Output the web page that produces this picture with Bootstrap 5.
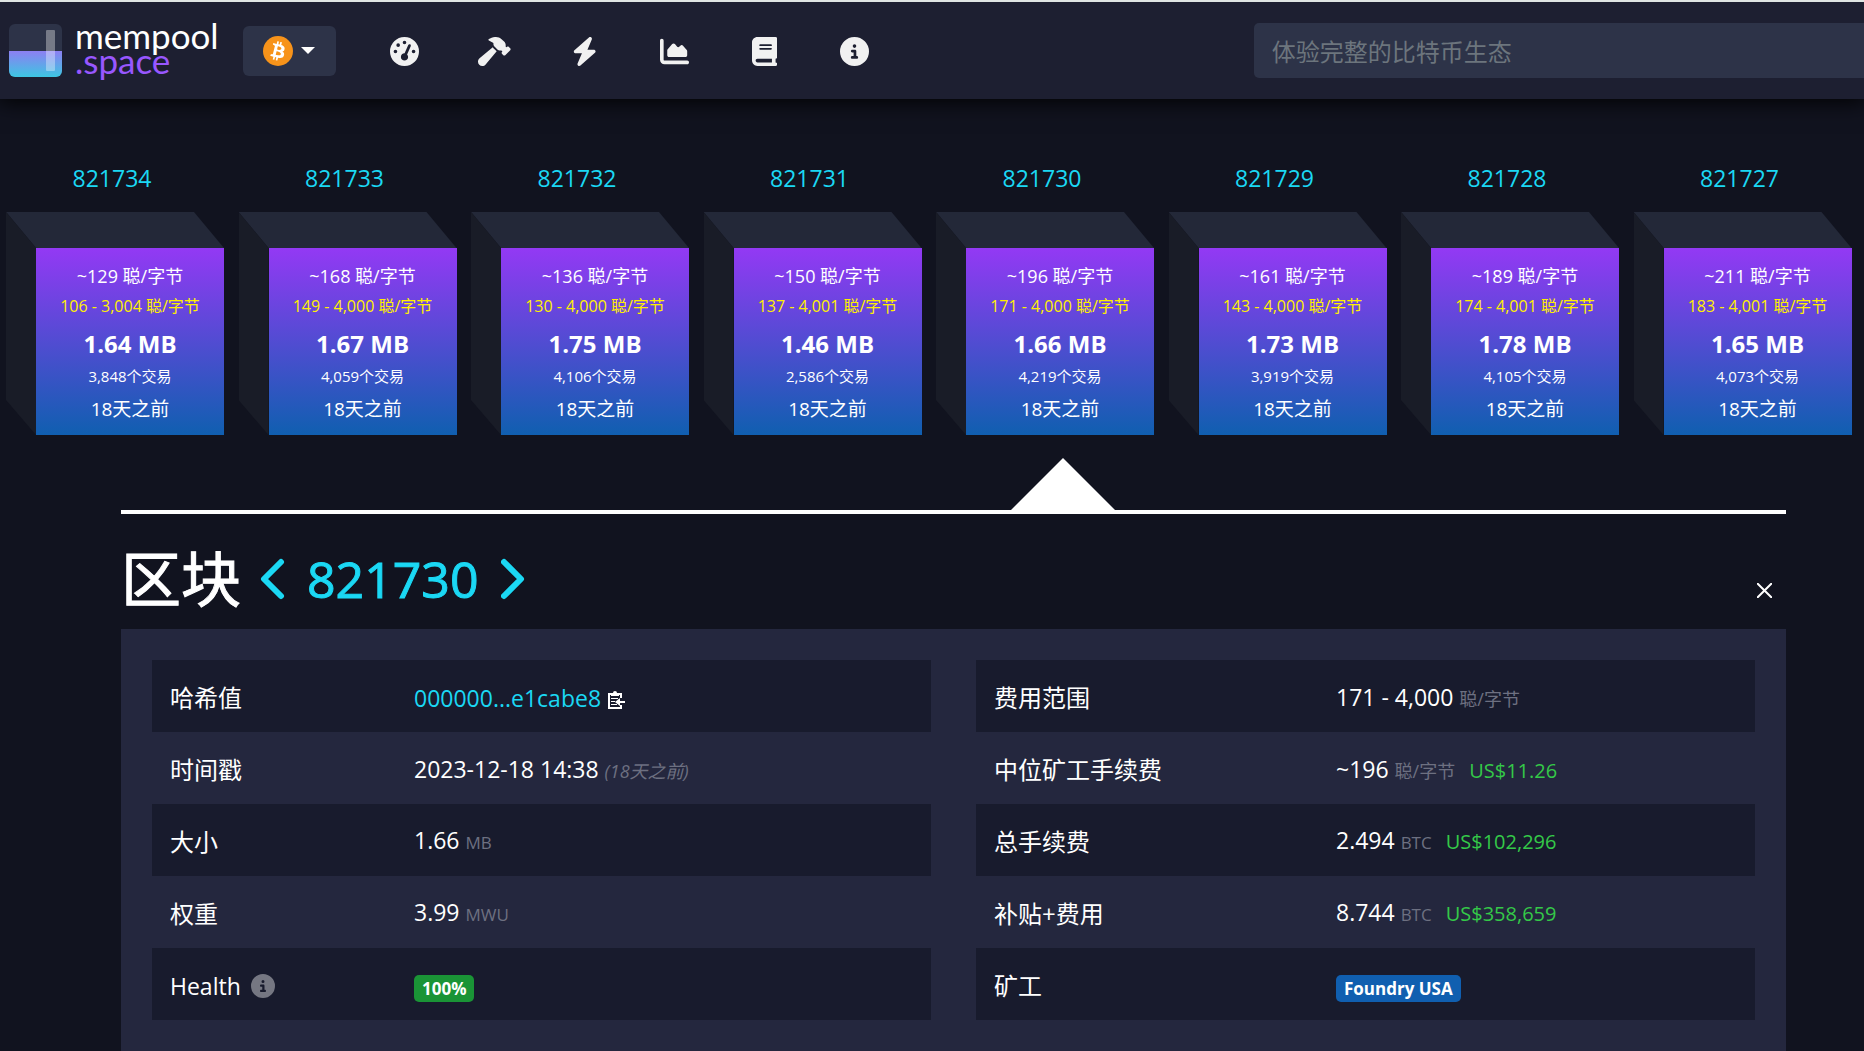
<!DOCTYPE html>
<html lang="zh-CN">
<head>
<meta charset="utf-8">
<meta name="viewport" content="width=device-width, initial-scale=1">
<title>mempool.space</title>
<link href="https://cdn.jsdelivr.net/npm/bootstrap@5.3.0/dist/css/bootstrap.min.css" rel="stylesheet">
<style>
:root { --ink:#11131f; --bar:#1d1f31; --well:#2d3348; --cyan:#1bd8f4; --dim:#6d7081; }
body { background:var(--ink); color:#fff; font-family:"Open Sans","Noto Sans CJK SC",sans-serif; font-size:23px; line-height:36px; overflow-x:hidden; }
a { color:var(--cyan); text-decoration:none; }
a:hover { color:#fff; }
.topbar { background:var(--bar); border-top:2px solid #dfe5e3; height:99px; padding-left:9px; box-shadow:0 0 22px 2px #000; position:relative; z-index:2; }
.brandmark { width:53px; height:53px; }
.wordmark { font-family:Lato,"Open Sans",sans-serif; font-size:35px; line-height:25px; color:#fff; padding-bottom:6px; margin-left:13px; }
.wordmark span { display:block; }
.wordmark .tld { color:#9857ff; }
.net-btn { width:93px; height:50px; background:var(--well); border:0; border-radius:6px; color:#fff; }
.net-btn:hover { background:#39405a; }
.menu-link { width:90px; height:50px; color:#f1f1f1; padding-top:2px; }
.menu-link svg { height:29px; }
.search-form { width:33%; padding-left:2px; }
.search-box, .search-box:focus { height:55px; background:var(--well); border:0; border-radius:5px 0 0 5px; color:#fff; font-size:24px; padding:2px 18px 0; box-shadow:none; }
.search-box::placeholder { color:#6c757d; opacity:1; }
.chain { display:grid; grid-template-columns:repeat(8,1fr); padding:61px 0 75px 4px; }
.chain-item { padding-left:2px; position:relative; }
.chain-item .height-link { display:block; width:212px; text-align:center; margin-bottom:16px; }
.cube { position:relative; width:218px; padding:36px 0 0 30px; }
.cube::before, .cube::after { content:""; position:absolute; inset:0; z-index:-1; }
.cube::before { background:#232838; clip-path:polygon(0 0,188px 0,100% 36px,30px 36px); }
.cube::after { background:#191c27; clip-path:polygon(0 0,30px 36px,30px 100%,0 188px); }
.face { height:187px; padding-top:14px; background:linear-gradient(#9339f4,#105fb0); text-align:center; white-space:nowrap; color:#fff; }
.fee-mid { font-size:18px; line-height:28px; }
.fee-span { font-size:16px; line-height:32px; color:#fff000; }
.blk-size { font-size:24px; line-height:44px; font-weight:700; }
.blk-txs { font-size:15px; line-height:20px; }
.blk-age { font-size:19px; line-height:46px; }
.pointer { position:absolute; left:77px; bottom:-75px; width:104px; height:52px; background:#fff; clip-path:polygon(50% 0,100% 100%,0 100%); }
.block-page { margin:0 78px 0 121px; border-top:4px solid #fff; }
.block-head { height:115px; padding:14px 14px 0 0; }
.block-head h1 { font-size:60px; line-height:72px; font-weight:400; -webkit-text-stroke:1px #fff; }
.block-head .num { font-size:50px; line-height:72px; -webkit-text-stroke:1px var(--cyan); margin:0 22px; }
.block-head .step { display:flex; }
.block-head h1 + .step { margin-left:18px; }
.close-btn { background:none; border:0; color:#fff; padding:0; width:15px; height:15px; line-height:0; }
.panel { background:#24273e; padding:31px 31px 48px; display:grid; grid-template-columns:1fr 1fr; gap:45px; }
.facts { width:100%; table-layout:fixed; }
.facts tr { height:72px; }
.facts tr:nth-child(odd) { background:#181b2d; }
.facts th { font-weight:400; font-size:24px; padding:3px 0 0 18px; width:262px; }
.facts.wide th { width:360px; }
.facts td { padding:3px 0 0; white-space:nowrap; }
.facts .latin { font-size:23px; }
.facts svg { vertical-align:-3px; }
.unit { font-size:18px; color:var(--dim); }
.unit.coin { font-size:17px; }
.usd { font-size:20px; color:#34c948; margin-left:8px; }
.tag { font-size:17px; line-height:27px; font-weight:700; border-radius:5px; padding:0 8px; display:inline-block; vertical-align:middle; color:#fff; }
.tag-ok { background:#1a9436; }
.tag-pool { background:#105fb0; }
</style>
</head>
<body>
<header class="topbar d-flex align-items-center">
  <a class="d-flex align-items-center" href="#" aria-label="mempool.space">
    <svg class="brandmark" viewBox="0 0 53 53"><defs><linearGradient id="lg" x1="0" y1="0" x2="0" y2="1"><stop offset="0" stop-color="#8d7ff2"/><stop offset="1" stop-color="#3dc6e2"/></linearGradient></defs><rect width="53" height="53" rx="6" fill="#2d3348"/><path d="M0 27H53V47a6 6 0 0 1-6 6H6a6 6 0 0 1-6-6Z" fill="url(#lg)"/><rect x="37" y="6" width="9" height="41" rx="1" fill="#fff" opacity=".35"/></svg>
    <span class="wordmark"><span>mempool</span><span class="tld">.space</span></span>
  </a>
  <button class="net-btn d-flex align-items-center justify-content-center ms-4" type="button" aria-label="Bitcoin">
    <svg width="30" height="30" viewBox="0 0 64 64"><circle cx="32" cy="32" r="32" fill="#f7931a"/><path fill="#fff" d="M46.1 27.4c.6-4.300-2.600-6.600-7.100-8.100l1.500-5.800-3.600-.9-1.400 5.700-2.800-.7 1.400-5.700-3.500-.9-1.500 5.800-7.100-1.700-.9 3.800s2.600.6 2.600.6c1.400.4 1.700 1.300 1.600 2.100l-4.100 16.400c-.2.400-.6 1.100-1.600.8 0 .1-2.600-.6-2.600-.6l-1.700 4.100 6.900 1.700-1.500 5.900 3.500.9 1.500-5.800 2.800.7-1.400 5.800 3.500.9 1.500-5.900c6 1.100 10.600.7 12.500-4.800 1.600-4.400-.1-6.900-3.200-8.600 2.300-.5 4-2 4.400-5.100zm-8.100 11.300c-1.100 4.400-8.500 2-10.900 1.400l1.900-7.800c2.400.6 10.100 1.800 9 6.400zm1.100-11.400c-1 4-7.200 2-9.200 1.500l1.800-7.100c2 .5 8.400 1.400 7.400 5.600z"/></svg>
    <svg class="ms-2" width="14" height="7" viewBox="0 0 14 7"><path d="M0 0h14L7 7Z" fill="#fff"/></svg>
  </button>
  <nav class="d-flex ms-4">
    <a class="menu-link d-flex align-items-center justify-content-center" href="#" aria-label="Dashboard"><svg viewBox="0 0 512 512"><path fill="currentColor" d="M0 256a256 256 0 1 1 512 0A256 256 0 1 1 0 256zM288 96a32 32 0 1 0-64 0 32 32 0 1 0 64 0zM256 416c35.300 0 64-28.700 64-64 0-17.400-6.900-33.100-18.100-44.600L366 161.700c5.300-12.100-.2-26.300-12.300-31.600s-26.300.2-31.600 12.300L257.900 288H256c-35.300 0-64 28.700-64 64s28.700 64 64 64zM176 144a32 32 0 1 0-64 0 32 32 0 1 0 64 0zM96 288a32 32 0 1 0 0-64 32 32 0 1 0 0 64zM448 256a32 32 0 1 0-64 0 32 32 0 1 0 64 0z"/></svg></a>
    <a class="menu-link d-flex align-items-center justify-content-center" href="#" aria-label="Mining"><svg viewBox="0 0 576 512"><path fill="currentColor" d="M413.500 237.500c-28.200 4.800-58.200-3.600-80-25.400l-38.100-38.100C280.400 159 272 138.800 272 117.600V105.500L192.300 62c-5.300-2.900-8.600-8.600-8.300-14.700s3.900-11.500 9.500-14l47.200-21C259.100 4.200 279 0 299.200 0h18.100c36.700 0 72 14 98.700 39.100l44.600 42c24.200 22.800 33.200 55.700 26.600 86L503 183l8-8c9.400-9.400 24.600-9.400 33.900 0l24 24c9.400 9.400 9.400 24.600 0 33.900l-88 88c-9.400 9.400-24.600 9.400-33.900 0l-24-24c-9.400-9.400-9.400-24.600 0-33.900l8-8-17.500-17.500zM27.400 377.100L260.900 182.600c3.500 4.900 7.500 9.600 11.800 14l38.100 38.100c6 6 12.400 11.200 19.200 15.700L134.900 484.600c-14.500 17.400-36 27.400-58.600 27.400C34.100 512 0 477.800 0 435.700c0-22.600 10.100-44.100 27.400-58.600z"/></svg></a>
    <a class="menu-link d-flex align-items-center justify-content-center" href="#" aria-label="Lightning"><svg viewBox="0 0 448 512"><path fill="currentColor" d="M349.400 44.600c5.900-13.700 1.500-29.700-10.600-38.500s-28.600-8-39.900 1.800l-256 224c-10 8.800-13.600 22.900-8.900 35.300S50.700 288 64 288H175.500L98.600 467.400c-5.900 13.700-1.500 29.700 10.600 38.500s28.600 8 39.900-1.800l256-224c10-8.800 13.600-22.900 8.900-35.300s-16.600-20.700-30-20.700H272.500L349.400 44.600z"/></svg></a>
    <a class="menu-link d-flex align-items-center justify-content-center" href="#" aria-label="Graphs"><svg viewBox="0 0 512 512"><path fill="currentColor" d="M64 64c0-17.700-14.300-32-32-32S0 46.300 0 64V400c0 44.200 35.800 80 80 80H480c17.700 0 32-14.300 32-32s-14.300-32-32-32H80c-8.800 0-16-7.200-16-16V64zm96 288H448c17.700 0 32-14.300 32-32V251.800c0-7.600-2.700-15-7.700-20.800l-65.800-76.800c-12.100-14.200-33.700-15-46.900-1.800l-21 21c-10 10-26.400 9.200-35.400-1.600l-39.200-47c-12.600-15.100-35.700-15.400-48.700-.6L135.900 215c-5.100 5.800-7.900 13.300-7.900 21.100v84c0 17.700 14.300 32 32 32z"/></svg></a>
    <a class="menu-link d-flex align-items-center justify-content-center" href="#" aria-label="Documentation"><svg viewBox="0 0 448 512"><path fill="currentColor" d="M96 0C43 0 0 43 0 96V416c0 53 43 96 96 96H384h32c17.700 0 32-14.300 32-32s-14.300-32-32-32V384c17.700 0 32-14.300 32-32V32c0-17.700-14.300-32-32-32H384 96zm0 384H352v64H96c-17.700 0-32-14.300-32-32s14.300-32 32-32zm32-240c0-8.800 7.200-16 16-16H336c8.800 0 16 7.200 16 16s-7.200 16-16 16H144c-8.800 0-16-7.200-16-16zm16 48H336c8.800 0 16 7.200 16 16s-7.200 16-16 16H144c-8.800 0-16-7.200-16-16s7.200-16 16-16z"/></svg></a>
    <a class="menu-link d-flex align-items-center justify-content-center" href="#" aria-label="About"><svg viewBox="0 0 512 512"><path fill="currentColor" d="M256 512A256 256 0 1 0 256 0a256 256 0 1 0 0 512zM216 336h24V272H216c-13.300 0-24-10.700-24-24s10.700-24 24-24h48c13.300 0 24 10.700 24 24v88h8c13.300 0 24 10.700 24 24s-10.700 24-24 24H216c-13.300 0-24-10.700-24-24s10.700-24 24-24zm40-208a32 32 0 1 1 0 64 32 32 0 1 1 0-64z"/></svg></a>
  </nav>
  <form class="search-form ms-auto"><input class="search-box form-control" type="text" aria-label="搜索" placeholder="体验完整的比特币生态"></form>
</header>

<section class="chain" id="chain"></section>

<main class="block-page">
  <div class="block-head d-flex align-items-center justify-content-between">
    <div class="d-flex align-items-center">
      <h1 class="m-0">区块</h1>
      <a class="step" href="#" aria-label="下一个区块"><svg width="26" height="42" viewBox="0 0 26 42"><path d="M22 4 5 21 22 38" fill="none" stroke="currentColor" stroke-width="6" stroke-linecap="round" stroke-linejoin="round"/></svg></a>
      <a class="num" href="#">821730</a>
      <a class="step" href="#" aria-label="上一个区块"><svg width="26" height="42" viewBox="0 0 26 42"><path d="M3 4 20 21 3 38" fill="none" stroke="currentColor" stroke-width="6" stroke-linecap="round" stroke-linejoin="round"/></svg></a>
    </div>
    <button class="close-btn mt-4" type="button" aria-label="关闭"><svg width="15" height="15" viewBox="0 0 15 15"><path d="M0 0 15 15M15 0 0 15" stroke="currentColor" stroke-width="2"/></svg></button>
  </div>
  <div class="panel">
    <table class="facts">
      <tbody>
      <tr><th scope="row">哈希值</th><td><a href="#">000000...e1cabe8</a> <svg width="19" height="20" viewBox="0 0 19 20" fill="none" stroke="#fff"><path stroke-width="2" d="M14 8V4H2v14h12v-3M18 12H10"/><path fill="#fff" stroke="none" d="M4 6V3h2a2 2 0 0 1 4 0h2v3zM8 12l5-4v8z"/><path d="M4 8.500h7M4 11.500h4M4 14.500h6"/></svg></td></tr>
      <tr><th scope="row">时间戳</th><td>2023-12-18 14:38 <i class="unit">(18天之前)</i></td></tr>
      <tr><th scope="row">大小</th><td>1.66 <span class="unit coin">MB</span></td></tr>
      <tr><th scope="row">权重</th><td>3.99 <span class="unit coin">MWU</span></td></tr>
      <tr><th scope="row" class="latin">Health <svg class="ms-1" width="24" height="24" viewBox="0 0 512 512"><path fill="#757782" d="M256 512A256 256 0 1 0 256 0a256 256 0 1 0 0 512zM216 336h24V272H216c-13.300 0-24-10.700-24-24s10.700-24 24-24h48c13.300 0 24 10.700 24 24v88h8c13.300 0 24 10.700 24 24s-10.700 24-24 24H216c-13.300 0-24-10.700-24-24s10.700-24 24-24zm40-208a32 32 0 1 1 0 64 32 32 0 1 1 0-64z"/></svg></th><td><span class="tag tag-ok">100%</span></td></tr>
      </tbody>
    </table>
    <table class="facts wide">
      <tbody>
      <tr><th scope="row">费用范围</th><td>171 - 4,000 <span class="unit">聪/字节</span></td></tr>
      <tr><th scope="row">中位矿工手续费</th><td>~196 <span class="unit">聪/字节</span> <span class="usd">US$11.26</span></td></tr>
      <tr><th scope="row">总手续费</th><td>2.494 <span class="unit coin">BTC</span> <span class="usd">US$102,296</span></td></tr>
      <tr><th scope="row">补贴+费用</th><td>8.744 <span class="unit coin">BTC</span> <span class="usd">US$358,659</span></td></tr>
      <tr><th scope="row">矿工</th><td><a class="tag tag-pool" href="#">Foundry USA</a></td></tr>
      </tbody>
    </table>
  </div>
</main>

<script src="https://cdn.jsdelivr.net/npm/bootstrap@5.3.0/dist/js/bootstrap.bundle.min.js"></script>
<script>
const blocks = [
  [821734,'129','106 - 3,004','1.64','3,848'],
  [821733,'168','149 - 4,000','1.67','4,059'],
  [821732,'136','130 - 4,000','1.75','4,106'],
  [821731,'150','137 - 4,001','1.46','2,586'],
  [821730,'196','171 - 4,000','1.66','4,219'],
  [821729,'161','143 - 4,000','1.73','3,919'],
  [821728,'189','174 - 4,001','1.78','4,105'],
  [821727,'211','183 - 4,001','1.65','4,073']
];
const current = 821730;
document.getElementById('chain').innerHTML = blocks.map(([h, mid, span, size, txs]) => `
  <div class="chain-item">
    <a class="height-link" href="#">${h}</a>
    <div class="cube"><div class="face">
      <div class="fee-mid">~${mid} 聪/字节</div>
      <div class="fee-span">${span} 聪/字节</div>
      <div class="blk-size">${size} MB</div>
      <div class="blk-txs">${txs}个交易</div>
      <div class="blk-age">18天之前</div>
    </div></div>
    ${h === current ? '<div class="pointer"></div>' : ''}
  </div>`).join('');
</script>
</body>
</html>
